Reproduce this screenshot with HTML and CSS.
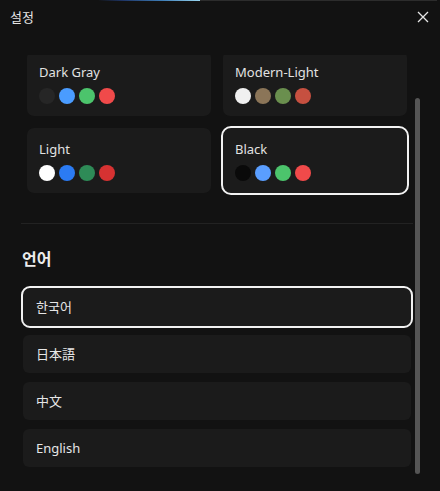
FILE: index.html
```html
<!DOCTYPE html>
<html lang="ko">
<head>
<meta charset="UTF-8">
<meta name="viewport" content="width=device-width, initial-scale=1.0">
<title>설정</title>
<link rel="stylesheet" href="styles.css">
</head>
<body>
<div class="topline"><span class="progress"></span></div>
<div class="header">
    <span class="title">설정</span>
    <button class="close" aria-label="닫기">
        <svg width="12" height="12" viewBox="0 0 12 12"><path d="M1 1L11 11M11 1L1 11" stroke="#e6e6e6" stroke-width="1.3" fill="none"/></svg>
    </button>
</div>

<div class="scroll">
    <div class="content">
        <!-- 테마 -->
        <div class="themes">
            <div class="theme">
                <div class="theme-name">Dark Gray</div>
                <div class="dots">
                    <span class="dot" style="background:#262626"></span>
                    <span class="dot" style="background:#4a9cff"></span>
                    <span class="dot" style="background:#4cc46c"></span>
                    <span class="dot" style="background:#f04a4a"></span>
                </div>
            </div>
            <div class="theme">
                <div class="theme-name">Modern-Light</div>
                <div class="dots">
                    <span class="dot" style="background:#f0f0f0"></span>
                    <span class="dot" style="background:#8b7558"></span>
                    <span class="dot" style="background:#6a8f4e"></span>
                    <span class="dot" style="background:#c65040"></span>
                </div>
            </div>
            <div class="theme">
                <div class="theme-name">Light</div>
                <div class="dots">
                    <span class="dot" style="background:#ffffff"></span>
                    <span class="dot" style="background:#2b7bf3"></span>
                    <span class="dot" style="background:#2e8b57"></span>
                    <span class="dot" style="background:#d63232"></span>
                </div>
            </div>
            <div class="theme selected">
                <div class="theme-name">Black</div>
                <div class="dots">
                    <span class="dot" style="background:#0a0a0a"></span>
                    <span class="dot" style="background:#5a9eff"></span>
                    <span class="dot" style="background:#4cc46c"></span>
                    <span class="dot" style="background:#f04a4a"></span>
                </div>
            </div>
        </div>

        <hr class="divider">

        <!-- 언어 -->
        <h2 class="section-title">언어</h2>
        <div class="langs">
            <div class="lang selected">한국어</div>
            <div class="lang">日本語</div>
            <div class="lang">中文</div>
            <div class="lang">English</div>
        </div>
    </div>
    <div class="scrollbar"><div class="thumb"></div></div>
</div>
</body>
</html>
```

FILE: styles.css
```css
body {
    margin: 0;
    height: 491px;
    overflow: hidden;
    background-color: #121212;
    color: #e4e4e4;
    font-family: "Noto Sans", "Noto Sans CJK KR", sans-serif;
}
.topline {
    height: 1px;
    margin: 0 3px;
    background-color: #2c2c2c;
}
.progress {
    display: block;
    width: 197px;
    height: 1px;
    background: linear-gradient(to right, #121212 0, #121212 95px, #1e3566 120px, #3f7fb8 160px, #9ad6f0 197px);
}
.header {
    height: 31px;
    display: flex;
    align-items: center;
    justify-content: space-between;
    padding: 0 10px;
}
.title {
    font-family: "Noto Sans CJK KR", sans-serif;
    font-size: 13px;
    color: #e6e6e6;
}
.close {
    background: none;
    border: none;
    padding: 0;
    margin-right: 1px;
    display: flex;
}
.scroll {
    margin-top: 23px;
    height: 420px;
    overflow: hidden;
    display: flex;
    padding-left: 21px;
}
.content {
    width: 392px;
    margin-top: -4px;
}
.themes {
    display: grid;
    grid-template-columns: 1fr 1fr;
    gap: 12px;
    padding: 0 6px;
}
.theme {
    height: 65px;
    box-sizing: border-box;
    padding: 13px 12px 12px;
    background-color: #1b1b1b;
    border-radius: 7px;
}
.theme.selected {
    outline: 2px solid #f2f2f2;
    border-radius: 8px;
}
.theme-name {
    font-size: 13px;
    line-height: 16px;
    color: #e2e2e2;
}
.dots {
    display: flex;
    gap: 4px;
    margin-top: 8px;
}
.dot {
    width: 16px;
    height: 16px;
    border-radius: 50%;
}
.divider {
    border: none;
    height: 1px;
    background-color: #222;
    margin: 30px 0 0;
}
.section-title {
    font-family: "Noto Sans CJK KR", sans-serif;
    font-size: 16px;
    line-height: 22px;
    font-weight: 700;
    color: #ececec;
    margin: 23px 0 0 1px;
}
.langs {
    display: flex;
    flex-direction: column;
    gap: 9px;
    margin: 19px 2px 0;
}
.lang {
    height: 38px;
    display: flex;
    align-items: center;
    padding: 0 0 1px 13px;
    box-sizing: border-box;
    background-color: #1b1b1b;
    border-radius: 6px;
    font-family: "Noto Sans", "Noto Sans CJK KR", "Noto Sans CJK JP", sans-serif;
    font-size: 13px;
    color: #e6e6e6;
}
.lang.selected {
    outline: 2px solid #f2f2f2;
    border-radius: 7px;
}
.scrollbar {
    width: 5px;
    margin-left: 2px;
}
.thumb {
    margin-top: 43px;
    height: 376px;
    background-color: #555;
    border-radius: 3px;
}
```
